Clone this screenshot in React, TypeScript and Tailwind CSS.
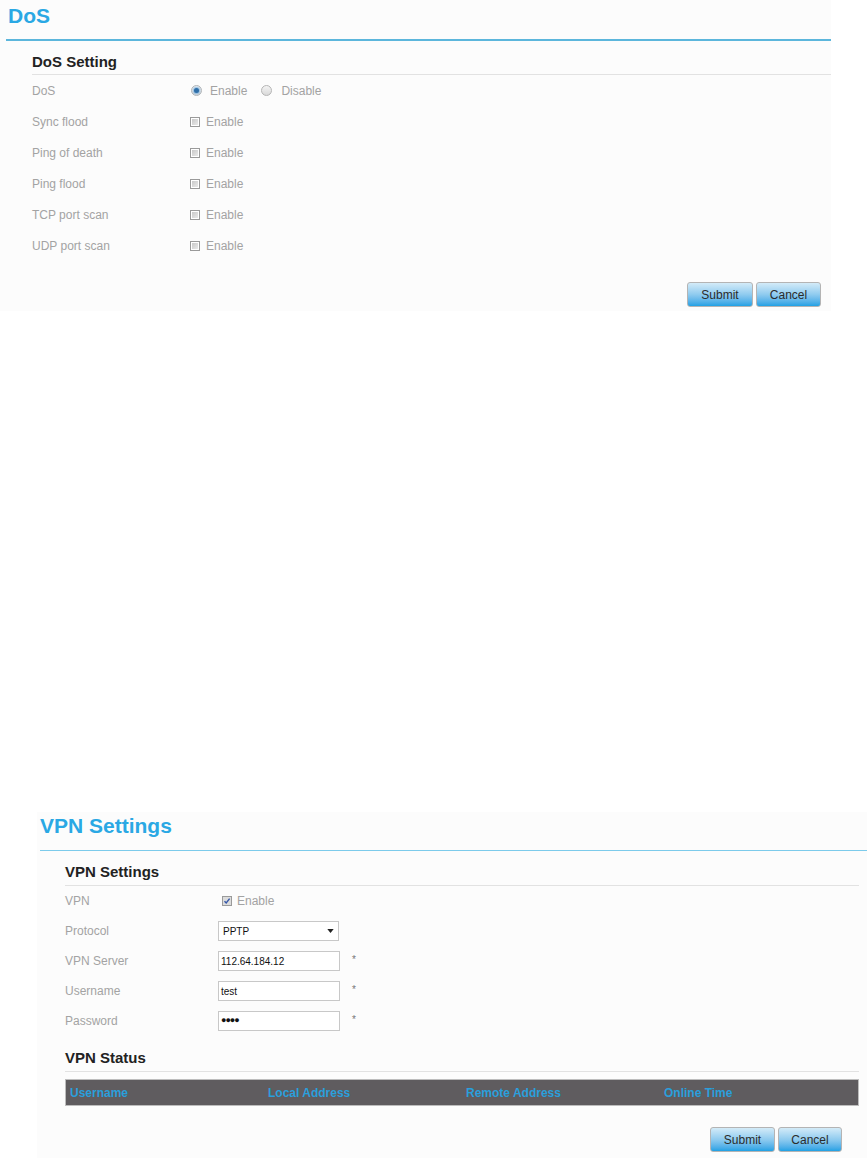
import type { ReactNode } from "react";

const FONT = "font-[family-name:Liberation_Sans,Arial,sans-serif]";

function Radio({ checked }: { checked?: boolean }) {
  return (
    <span className="flex h-[11px] w-[11px] items-center justify-center rounded-full border border-[#b5b5b5] bg-gradient-to-b from-[#f4f4f4] to-[#d9d9d9]">
      {checked ? (
        <span className="h-[5px] w-[5px] rounded-full bg-[#2f6fa8] shadow-[0_0_2px_1px_#7fb3df]" />
      ) : null}
    </span>
  );
}

function Checkbox({ checked }: { checked?: boolean }) {
  return (
    <span className="flex h-[10px] w-[10px] items-center justify-center border border-[#9a9a9a] bg-white">
      {checked ? (
        <svg viewBox="0 0 8 8" className="h-[8px] w-[8px] bg-[#dcdcdc]">
          <path d="M1.5 4.2 L3.2 6 L6.6 1.6" fill="none" stroke="#3557a8" strokeWidth="1.4" />
        </svg>
      ) : (
        <span className="h-[6px] w-[6px] bg-gradient-to-br from-[#c9c9c9] to-[#e9e9e9]" />
      )}
    </span>
  );
}

function Row({ label, labelWidth, height, children }: { label: string; labelWidth: string; height: string; children: ReactNode }) {
  return (
    <div className={`flex items-center ${height}`}>
      <div className={`${labelWidth} shrink-0 text-[12px] text-[#a3a3a3]`}>{label}</div>
      <div className="flex items-center">{children}</div>
    </div>
  );
}

function Button({ children, width }: { children: ReactNode; width: string }) {
  return (
    <button
      type="button"
      className={`${width} h-[25px] rounded-[3px] border border-[#b4b4b4] bg-gradient-to-b from-[#d3ebf8] via-[#8fcbef] to-[#1da1e4] text-[12px] text-[#2b2b2b]`}
    >
      {children}
    </button>
  );
}

function TextInput({ value, password }: { value: string; password?: boolean }) {
  return (
    <div className="flex items-center">
      <div className="flex h-[20px] w-[122px] items-center border border-[#c8c8c8] bg-white pl-[2px] text-[10px] text-[#111]">
        {password ? <span className="text-[9px] tracking-[-1px]">●●●●</span> : value}
      </div>
      <span className="ml-[12px] -mt-[4px] text-[10px] text-[#777]">*</span>
    </div>
  );
}

const dosRows = ["Sync flood", "Ping of death", "Ping flood", "TCP port scan", "UDP port scan"];

export default function App() {
  return (
    <div className={`${FONT} min-h-[1158px] bg-white`}>
      {/* DoS */}
      <section className="h-[311px] w-[831px] bg-[#fcfcfc]">
        <div className="h-[39px] pl-[8px] pt-[4px]">
          <h1 className="text-[21px] font-bold leading-[24px] text-[#2aa8e4]">DoS</h1>
        </div>
        <div className="ml-[6px] h-[2px] bg-[#5cb6dc]" />
        <div className="ml-[32px]">
          <h2 className="border-b border-[#e2e2e2] pb-[3px] pt-[12px] text-[15px] font-bold leading-[18px] text-[#222]">
            DoS Setting
          </h2>
          <Row label="DoS" labelWidth="w-[159px]" height="h-[31px]">
            <Radio checked />
            <span className="ml-[8px] text-[12px] text-[#a3a3a3]">Enable</span>
            <span className="ml-[14px]">
              <Radio />
            </span>
            <span className="ml-[9px] text-[12px] text-[#a3a3a3]">Disable</span>
          </Row>
          {dosRows.map((label) => (
            <Row key={label} label={label} labelWidth="w-[158px]" height="h-[31px]">
              <Checkbox />
              <span className="ml-[6px] text-[12px] text-[#a3a3a3]">Enable</span>
            </Row>
          ))}
          <div className="mt-[21px] flex justify-end gap-[3px] pr-[10px]">
            <Button width="w-[66px]">Submit</Button>
            <Button width="w-[65px]">Cancel</Button>
          </div>
        </div>
      </section>

      {/* VPN */}
      <section className="ml-[37px] mt-[501px] h-[346px] bg-[#fcfcfc]">
        <div className="h-[38px] pl-[3px] pt-[2px]">
          <h1 className="text-[21px] font-bold leading-[24px] text-[#2aa8e4]">VPN Settings</h1>
        </div>
        <div className="ml-[3px] h-px bg-[#7ccbeb]" />
        <div className="ml-[28px] mr-[8px]">
          <h2 className="border-b border-[#e2e2e2] pb-[4px] pt-[12px] text-[15px] font-bold leading-[18px] text-[#222]">
            VPN Settings
          </h2>
          <div>
            <Row label="VPN" labelWidth="w-[157px]" height="h-[30px]">
              <Checkbox checked />
              <span className="ml-[5px] text-[12px] text-[#a3a3a3]">Enable</span>
            </Row>
            <Row label="Protocol" labelWidth="w-[153px]" height="h-[30px]">
              <div className="flex h-[20px] w-[121px] items-center justify-between border border-[#c8c8c8] bg-white pl-[4px] pr-[4px] text-[10px] text-[#111]">
                <span>PPTP</span>
                <svg viewBox="0 0 8 5" className="h-[4px] w-[7px]">
                  <path d="M0 0 H8 L4 5 Z" fill="#222" />
                </svg>
              </div>
            </Row>
            <Row label="VPN Server" labelWidth="w-[153px]" height="h-[30px]">
              <TextInput value="112.64.184.12" />
            </Row>
            <Row label="Username" labelWidth="w-[153px]" height="h-[30px]">
              <TextInput value="test" />
            </Row>
            <Row label="Password" labelWidth="w-[153px]" height="h-[30px]">
              <TextInput value="test" password />
            </Row>
          </div>
          <h2 className="mt-[13px] border-b border-[#e2e2e2] pb-[4px] text-[15px] font-bold leading-[18px] text-[#222]">
            VPN Status
          </h2>
          <div className="mt-[7px] grid h-[27px] grid-cols-4 items-center border border-[#bdbdbd] bg-[#5f5c5f] text-[12px] font-bold text-[#2a9fdc]">
            <span className="pl-[4px]">Username</span>
            <span className="pl-[4px]">Local Address</span>
            <span className="pl-[4px]">Remote Address</span>
            <span className="pl-[4px]">Online Time</span>
          </div>
          <div className="mt-[21px] flex justify-end gap-[3px] pr-[17px]">
            <Button width="w-[65px]">Submit</Button>
            <Button width="w-[64px]">Cancel</Button>
          </div>
        </div>
      </section>
    </div>
  );
}
